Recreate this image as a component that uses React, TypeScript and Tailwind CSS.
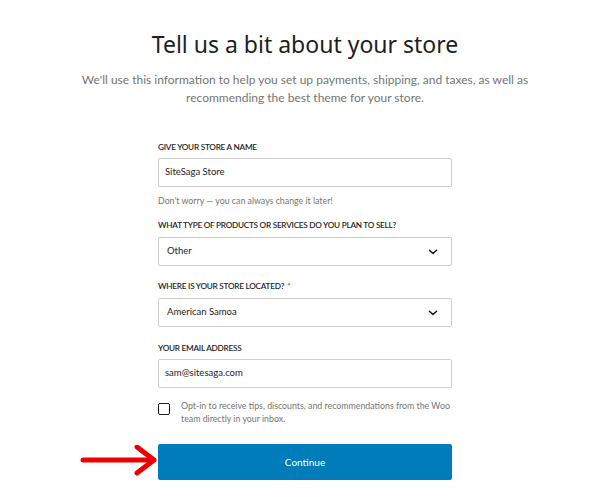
import React from "react";

function Chevron() {
  return (
    <svg width="10" height="6" viewBox="0 0 10 6" fill="none" className="shrink-0">
      <path d="M1.4 1.2 5 4.4 8.6 1.2" stroke="#1e1e1e" strokeWidth="1.5" strokeLinecap="round" strokeLinejoin="round" />
    </svg>
  );
}

function Label({ children, required }: { children: React.ReactNode; required?: boolean }) {
  return (
    <div className="text-[8.2px] leading-[12px] font-semibold uppercase text-[#1e1e1e] tracking-[-0.03em]">
      {children}
      {required && <span className="text-[#cc1818] ml-[3px]">*</span>}
    </div>
  );
}

function TextInput({ value }: { value: string }) {
  return (
    <div className="h-[29px] border border-[#cfcfcf] rounded-[2px] flex items-center px-[6px] text-[9.5px] text-[#1e1e1e]">
      {value}
    </div>
  );
}

function SelectBox({ value }: { value: string }) {
  return (
    <div className="h-[29px] border border-[#cfcfcf] rounded-[2px] flex items-center justify-between pl-[8px] pr-[13px] text-[9.5px] text-[#1e1e1e]">
      <span>{value}</span>
      <Chevron />
    </div>
  );
}

export default function App() {
  return (
    <div className="min-h-screen bg-white pl-[12px]" style={{ fontFamily: 'Lato, "Noto Sans", sans-serif' }}>
      <div className="flex flex-col items-center pt-[30px]">
        <h1
          className="text-[23px] leading-[28px] font-normal text-[#1e1e1e]"
          style={{ fontFamily: '"Noto Sans", "Open Sans", sans-serif' }}
        >
          Tell us a bit about your store
        </h1>
        <p className="mt-[13px] text-[12px] leading-[18px] text-[#757575] text-center">
          We'll use this information to help you set up payments, shipping, and taxes, as well as
          <br />
          recommending the best theme for your store.
        </p>

        <div className="w-[294px] mt-[34px] flex flex-col">
          <Label>Give your store a name</Label>
          <div className="mt-[5px]">
            <TextInput value="SiteSaga Store" />
          </div>
          <div className="mt-[8px] text-[8.8px] leading-[12px] text-[#757575]">
            Don't worry — you can always change it later!
          </div>

          <div className="mt-[12px]">
            <Label>What type of products or services do you plan to sell?</Label>
          </div>
          <div className="mt-[6px]">
            <SelectBox value="Other" />
          </div>

          <div className="mt-[14px]">
            <Label required>Where is your store located?</Label>
          </div>
          <div className="mt-[6px]">
            <SelectBox value="American Samoa" />
          </div>

          <div className="mt-[15px]">
            <Label>Your email address</Label>
          </div>
          <div className="mt-[5px]">
            <TextInput value="sam@sitesaga.com" />
          </div>

          <div className="mt-[11px] flex items-start gap-[11px]">
            <div className="mt-[4px] w-[12px] h-[12px] border border-[#1e1e1e] rounded-[2px] shrink-0" />
            <div className="text-[8.8px] leading-[13px] text-[#757575]">
              Opt-in to receive tips, discounts, and recommendations from the Woo
              <br />
              team directly in your inbox.
            </div>
          </div>

          <div className="relative mt-[19px]">
            <button className="w-full h-[36px] bg-[#007cba] rounded-[2px] text-white text-[10px]">Continue</button>
            <svg className="absolute left-[-78px] top-[1px]" width="78" height="34" viewBox="0 0 78 34" fill="none">
              <path d="M3 15 H73" stroke="#ee0000" strokeWidth="5" strokeLinecap="round" />
              <path d="M57 2 L74 15 L57 28" stroke="#ee0000" strokeWidth="5" strokeLinecap="round" strokeLinejoin="round" />
            </svg>
          </div>
        </div>
      </div>
    </div>
  );
}
